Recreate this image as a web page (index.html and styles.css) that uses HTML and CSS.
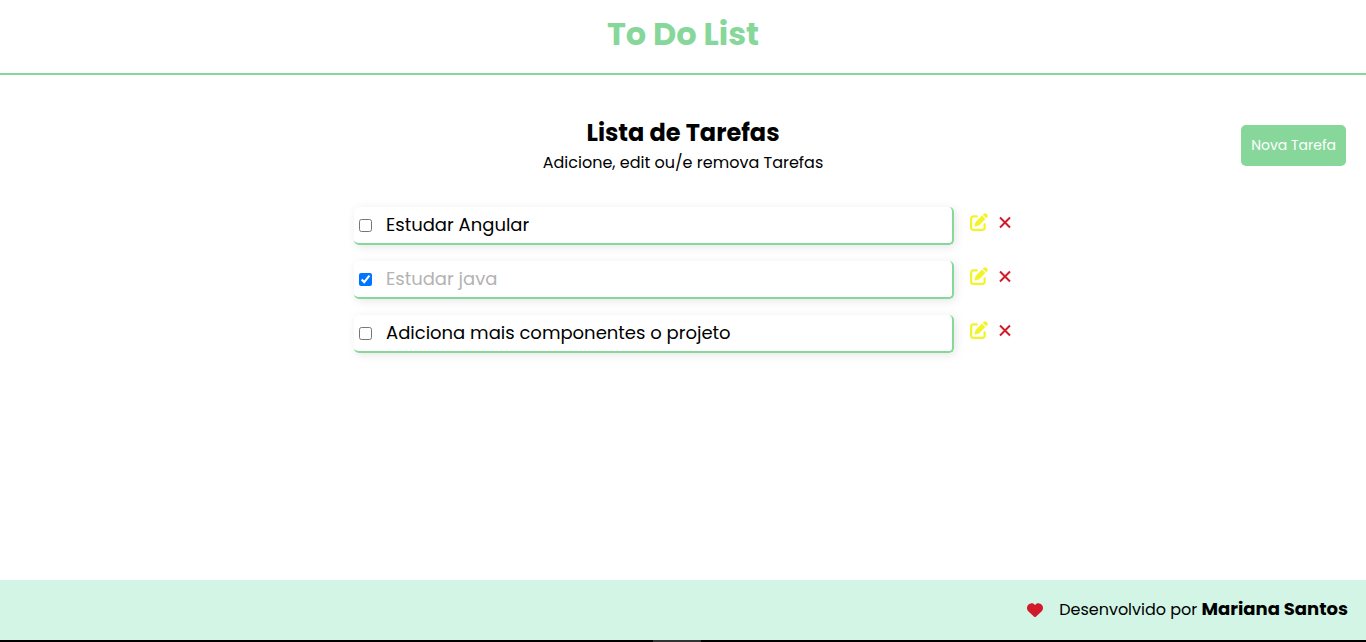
FILE: index.html
```html
<!DOCTYPE html>
<html lang="pt-BR">
<head>
  <meta charset="utf-8">
  <meta name="viewport" content="width=device-width, initial-scale=1">
  <title>To Do List</title>
  <link rel="stylesheet" href="styles.css">
</head>
<body>
  <svg class="sprite" aria-hidden="true">
    <symbol id="icon-edit" viewBox="0 0 512 512"><path d="M471.6 21.7c-21.9-21.9-57.3-21.9-79.2 0L362.3 51.7l97.9 97.9 30.1-30.1c21.9-21.9 21.9-57.3 0-79.2L471.6 21.7zm-299.2 220c-6.1 6.1-10.8 13.6-13.5 21.9l-29.6 88.8c-2.9 8.6-.6 18.1 5.8 24.6s15.9 8.7 24.6 5.8l88.8-29.6c8.2-2.7 15.7-7.4 21.9-13.5L437.7 172.3 339.7 74.3 172.4 241.7zM96 64C43 64 0 107 0 160V416c0 53 43 96 96 96H352c53 0 96-43 96-96V320c0-17.7-14.3-32-32-32s-32 14.3-32 32v96c0 17.7-14.3 32-32 32H96c-17.7 0-32-14.3-32-32V160c0-17.7 14.3-32 32-32h96c17.7 0 32-14.3 32-32s-14.3-32-32-32H96z"/></symbol>
    <symbol id="icon-remove" viewBox="0 0 13 13"><path d="M1 1.5l10 10M11 1.5l-10 10" fill="none" stroke="currentColor" stroke-width="2"/></symbol>
    <symbol id="icon-heart" viewBox="0 0 512 512"><path d="M47.6 300.4L228.3 469.1c7.5 7 17.4 10.9 27.7 10.9s20.2-3.9 27.7-10.9L464.4 300.4c30.4-28.3 47.6-68 47.6-109.5v-5.8c0-69.9-50.5-129.5-119.4-141C347 36.5 300.6 51.4 268 84L256 96 244 84c-32.6-32.6-79-47.5-124.6-39.9C50.5 55.6 0 115.2 0 185.1v5.8c0 41.5 17.2 81.2 47.6 109.5z"/></symbol>
  </svg>

  <header class="header">
    <h1 class="header-title">To Do List</h1>
  </header>

  <main class="main">
    <div class="intro">
      <div class="intro-text">
        <h2 class="intro-title">Lista de Tarefas</h2>
        <p class="intro-subtitle">Adicione, edit ou/e remova Tarefas</p>
      </div>
      <button class="new-task" type="button">Nova Tarefa</button>
    </div>

    <ul class="tasks">
      <li class="task">
        <div class="task-card">
          <input class="task-check" type="checkbox" id="task-1">
          <label class="task-label" for="task-1">Estudar Angular</label>
        </div>
        <div class="task-actions">
          <button class="action action-edit" type="button" aria-label="Editar"><svg class="icon-edit"><use href="#icon-edit"/></svg></button>
          <button class="action action-remove" type="button" aria-label="Remover"><svg class="icon-remove"><use href="#icon-remove"/></svg></button>
        </div>
      </li>
      <li class="task">
        <div class="task-card">
          <input class="task-check" type="checkbox" id="task-2" checked>
          <label class="task-label" for="task-2">Estudar java</label>
        </div>
        <div class="task-actions">
          <button class="action action-edit" type="button" aria-label="Editar"><svg class="icon-edit"><use href="#icon-edit"/></svg></button>
          <button class="action action-remove" type="button" aria-label="Remover"><svg class="icon-remove"><use href="#icon-remove"/></svg></button>
        </div>
      </li>
      <li class="task">
        <div class="task-card">
          <input class="task-check" type="checkbox" id="task-3">
          <label class="task-label" for="task-3">Adiciona mais componentes o projeto</label>
        </div>
        <div class="task-actions">
          <button class="action action-edit" type="button" aria-label="Editar"><svg class="icon-edit"><use href="#icon-edit"/></svg></button>
          <button class="action action-remove" type="button" aria-label="Remover"><svg class="icon-remove"><use href="#icon-remove"/></svg></button>
        </div>
      </li>
    </ul>
  </main>

  <footer class="footer">
    <svg class="icon-heart" aria-hidden="true"><use href="#icon-heart"/></svg>
    <p class="credit">Desenvolvido por <strong class="credit-name">Mariana Santos</strong></p>
  </footer>
  <div class="bottom-bar"><span class="bottom-handle"></span></div>
</body>
</html>
```

FILE: styles.css
```css
:root {
  --green: #87d79a;
  --mint: #d2f5e5;
  --red: #d11a2a;
  --yellow: #f3f32b;
}

* {
  box-sizing: border-box;
  margin: 0;
  padding: 0;
}

body {
  display: flex;
  flex-direction: column;
  min-height: 100vh;
  background: #fff;
  color: #000;
  font-family: Poppins, Inter, "Open Sans", sans-serif;
  font-size: 16px;
  line-height: 24px;
}

.sprite {
  display: none;
}

.header {
  padding: 10px 20px 15px;
  border-bottom: 2px solid var(--green);
  text-align: center;
}

.header-title {
  color: var(--green);
  font-size: 32px;
  line-height: 48px;
}

.main {
  flex: 1;
  padding: 40px 20px;
}

.intro {
  display: grid;
  grid-template-columns: 1fr auto 1fr;
  align-items: end;
}

.intro-text {
  grid-column: 2;
  padding-bottom: 4px;
  text-align: center;
}

.intro-title {
  font-size: 24px;
  line-height: 36px;
}

.new-task {
  justify-self: end;
  margin-bottom: 13px;
  padding: 10px;
  border: 0;
  border-radius: 5px;
  background: var(--green);
  color: #fff;
  font: inherit;
  font-size: 14px;
  line-height: 21px;
  cursor: pointer;
}

.tasks {
  display: grid;
  gap: 16px;
  max-width: 658px;
  margin: 28px auto 0;
  list-style: none;
}

.task {
  display: flex;
  gap: 16px;
}

.task-card {
  display: flex;
  flex: 1;
  align-items: center;
  gap: 14px;
  padding: 4px 5px;
  border-right: 2px solid var(--green);
  border-bottom: 2px solid var(--green);
  border-radius: 5px;
  box-shadow: 2px 2px 10px rgba(0, 0, 0, 0.1);
}

.task-check {
  width: 13px;
  height: 13px;
}

.task-label {
  font-size: 18px;
  line-height: 28px;
}

.task-check:checked + .task-label {
  color: #b3b3b3;
}

.task-actions {
  display: flex;
  align-items: center;
  gap: 11px;
  padding-bottom: 8px;
}

.action {
  display: flex;
  border: 0;
  background: none;
  cursor: pointer;
}

.action-edit {
  color: var(--yellow);
}

.action-remove {
  color: var(--red);
}

.icon-edit {
  width: 18px;
  height: 18px;
  fill: currentColor;
}

.icon-remove {
  width: 13px;
  height: 13px;
}

.icon-heart {
  width: 16px;
  height: 16px;
  fill: var(--red);
}

.footer {
  display: flex;
  align-items: center;
  justify-content: flex-end;
  gap: 16px;
  padding: 18px;
  background: var(--mint);
}

.credit-name {
  font-size: 18px;
  line-height: 18px;
}

.bottom-bar {
  display: flex;
  justify-content: center;
  height: 2px;
  background: #000;
}

.bottom-handle {
  width: 48px;
  margin-right: 12px;
  background: #333;
}
```
